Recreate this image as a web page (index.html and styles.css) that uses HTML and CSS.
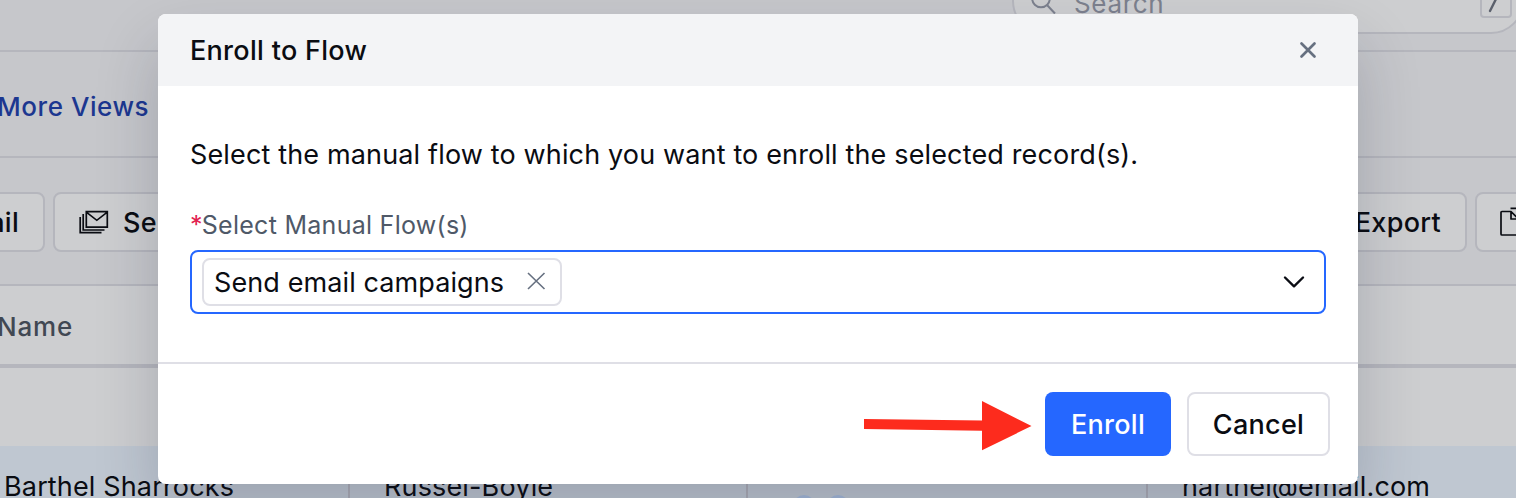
FILE: index.html
```
<!DOCTYPE html>
<html lang="en">
<head>
<meta charset="utf-8">
<title>Enroll to Flow</title>
<link rel="stylesheet" href="styles.css">
</head>
<body>
<div class="page">
  <header class="topbar">
    <div class="search">
      <svg class="search-icon" width="28" height="28" viewBox="0 0 28 28" fill="none" stroke="currentColor" stroke-width="2"><circle cx="10" cy="9.500" r="8.800"/><path d="M16 16l8 8.500"/></svg>
      <span class="search-text">Search</span>
      <span class="key"><svg width="28" height="28" viewBox="0 0 28 28" fill="none" stroke="currentColor" stroke-width="2.400" stroke-linecap="round"><path d="M8 23L17.500 4"/></svg></span>
    </div>
  </header>
  <nav class="views"><span class="more">More Views</span></nav>
  <div class="toolbar">
    <div class="tool tool-mail"><span>Email</span></div>
    <div class="tool tool-send">
      <svg width="30" height="24" viewBox="0 0 30 24" fill="none" stroke="currentColor" stroke-width="1.700"><path d="M7.300 1.600H28.300V17.200H7.300ZM7.300 2.200L17.800 10.300L28.300 2.200M4.200 4V20H25.500M1.200 7V22.600H22.500"/></svg>
      <span>Send</span>
    </div>
    <div class="tool tool-export"><span>Export</span></div>
    <div class="tool tool-copy">
      <svg width="28" height="30" viewBox="0 0 28 30" fill="none" stroke="currentColor" stroke-width="1.700" stroke-linejoin="round"><path d="M11 4.500H2Q1 4.500 1 5.500V27Q1 28 2 28H22V12H11V4.500L18.500 12M10.500 1.300H19L27 8.500V22H22"/></svg>
    </div>
  </div>
  <div class="thead"><span>Name</span></div>
  <div class="row"></div>
  <div class="row row-on">
    <div class="cell cell-name"><span>Barthel Sharrocks</span></div>
    <div class="cell cell-company"><span>Russel-Boyle</span></div>
    <div class="cell cell-tags"><i class="dot"></i><i class="dot"></i></div>
    <div class="cell cell-mail"><span>harthel@email.com</span></div>
  </div>
</div>
<div class="modal">
  <div class="modal-head">
    <span class="title">Enroll to Flow</span>
    <svg width="20" height="20" viewBox="0 0 20 20" fill="none" stroke="#667080" stroke-width="2.700" stroke-linecap="round"><path d="M3.500 3.500L16.500 16.500M16.500 3.500L3.500 16.500"/></svg>
  </div>
  <div class="modal-body">
    <p class="lead">Select the manual flow to which you want to enroll the selected record(s).</p>
    <div class="label"><span class="req">*</span><span class="label-text">Select Manual Flow(s)</span></div>
    <div class="select">
      <div class="chip">
        <span class="chip-text">Send email campaigns</span>
        <svg width="20" height="20" viewBox="0 0 20 20" fill="none" stroke="#667080" stroke-width="1.600"><path d="M2 1L18.500 17M18.500 1L2 17"/></svg>
      </div>
      <svg width="24" height="16" viewBox="0 0 24 16" fill="none" stroke="#0b0d14" stroke-width="2.400" stroke-linecap="round" stroke-linejoin="round"><path d="M3 3.500L12 12.300L21 3.500"/></svg>
    </div>
  </div>
  <div class="modal-foot">
    <svg class="arrow" width="168" height="50" viewBox="0 0 168 50" fill="#fd2b1d"><path d="M0 18L118 19.500V0L167.500 25L118 49.300V29.700L0 28Z"/></svg>
    <div class="btn btn-primary"><span>Enroll</span></div>
    <div class="btn btn-plain"><span>Cancel</span></div>
  </div>
</div>
</body>
</html>
```
FILE: styles.css
```
* { box-sizing: border-box; }
body { margin: 0; width: 1516px; height: 498px; overflow: hidden; position: relative; font-family: Inter, "Liberation Sans", sans-serif; font-size: 27px; letter-spacing: .15px; line-height: 32px; color: #0a0c12; }
span { white-space: nowrap; }
svg { display: block; flex: none; }
.page { width: 1516px; height: 498px; overflow: hidden; background: #c6c7cb; display: flex; flex-direction: column; }
.page > * { flex: none; }
.topbar { height: 52px; border-bottom: 2px solid #b5b6bd; display: flex; align-items: flex-end; padding: 0 0 16px 1012px; }
.search { width: 512px; height: 66px; flex: none; border: 2px solid #b5b6bd; border-radius: 33px; background: #cdced0; display: flex; align-items: center; padding: 4px 10px 0 17px; color: #7c818e; }
.search-text { margin: 2px auto 0 15px; font-size: 26px; letter-spacing: .65px; }
.key { width: 32px; height: 32px; border: 2px solid #b5b6bd; border-radius: 4px; color: #5b606c; margin-top: -2px; }
.views { height: 106px; border-bottom: 2px solid #b5b6bd; display: flex; align-items: center; font-weight: 500; color: #1c3790; font-size: 26px; }
.more { margin-left: -3px; margin-top: 5px; letter-spacing: .55px; }
.toolbar { height: 128px; border-bottom: 2px solid #b5b6bd; display: flex; align-items: center; font-weight: 500; padding-top: 2px; letter-spacing: .3px; }
.tool { height: 60px; border: 2px solid #b5b6bd; border-radius: 8px; background: #cdced0; display: flex; align-items: center; flex: none; }
.tool span { margin-top: 2px; }
.tool-mail { width: 103px; margin-left: -58px; justify-content: flex-end; padding-right: 24px; }
.tool-send { width: 174px; margin-left: 8px; padding-left: 24px; gap: 14px; }
.tool-export { width: 160px; margin-left: auto; justify-content: flex-end; padding-right: 24px; }
.tool-copy { width: 141px; margin: 0 -100px 0 8px; padding-left: 23px; }
.thead { height: 82px; border-bottom: 4px solid #b5b6bd; background: #cdced0; display: flex; align-items: center; font-weight: 500; color: #414853; font-size: 26px; letter-spacing: .8px; }
.thead span { margin-left: -3px; margin-top: 4px; }
.row { height: 78px; background: #cdced0; }
.row-on { display: flex; background: #bfc7d1; }
.cell { flex: none; height: 78px; display: flex; align-items: center; padding-top: 4px; border-right: 2px solid #aeafb8; }
.cell-name { width: 350px; padding-left: 4px; }
.cell-company { width: 398px; padding-left: 34px; }
.cell-tags { width: 400px; padding: 49px 0 0 45px; gap: 2px; align-items: flex-start; }
.dot { width: 22px; height: 22px; border-radius: 50%; background: #a6bbda; margin-right: 10px; }
.cell-mail { width: 368px; border-right: 0; padding-left: 34px; }
.modal { position: absolute; left: 158px; top: 14px; width: 1200px; height: 470px; background: #fff; border-radius: 8px; box-shadow: 0 32px 64px rgba(20, 24, 50, .2); display: flex; flex-direction: column; }
.modal-head { height: 72px; background: #f3f4f6; border-radius: 8px 8px 0 0; display: flex; align-items: center; justify-content: space-between; padding: 0 40px 0 32px; }
.title { font-weight: 500; letter-spacing: .3px; margin-top: 1px; }
.modal-body { height: 276px; padding: 53px 32px 0; }
.lead { margin: 0; white-space: nowrap; }
.label { display: flex; margin-top: 38px; height: 32px; color: #4f5968; font-size: 25px; letter-spacing: .27px; }
.req { color: #e2204f; }
.label-text { margin-left: -1px; }
.select { margin-top: 9px; height: 64px; border: 2px solid #2567ff; border-radius: 8px; display: flex; align-items: center; justify-content: space-between; padding: 0 18px 0 10px; }
.chip { width: 360px; height: 48px; border: 2px solid #dfdfe6; border-radius: 8px; display: flex; align-items: center; justify-content: space-between; padding: 0 14px 0 10px; letter-spacing: .1px; }
.chip-text { padding-top: 2px; }
.modal-foot { flex: 1; border-top: 2px solid #dfdfe6; display: flex; justify-content: flex-end; align-items: flex-start; padding: 28px 28px 0 0; }
.arrow { margin: 9px 13px 0 0; }
.btn { height: 64px; border-radius: 8px; display: flex; align-items: center; justify-content: center; font-weight: 500; letter-spacing: .3px; }
.btn span { margin-top: 1px; }
.btn-primary { width: 126px; background: #2567ff; color: #fff; margin-right: 16px; }
.btn-plain { width: 143px; border: 2px solid #dfdfe6; }
```
